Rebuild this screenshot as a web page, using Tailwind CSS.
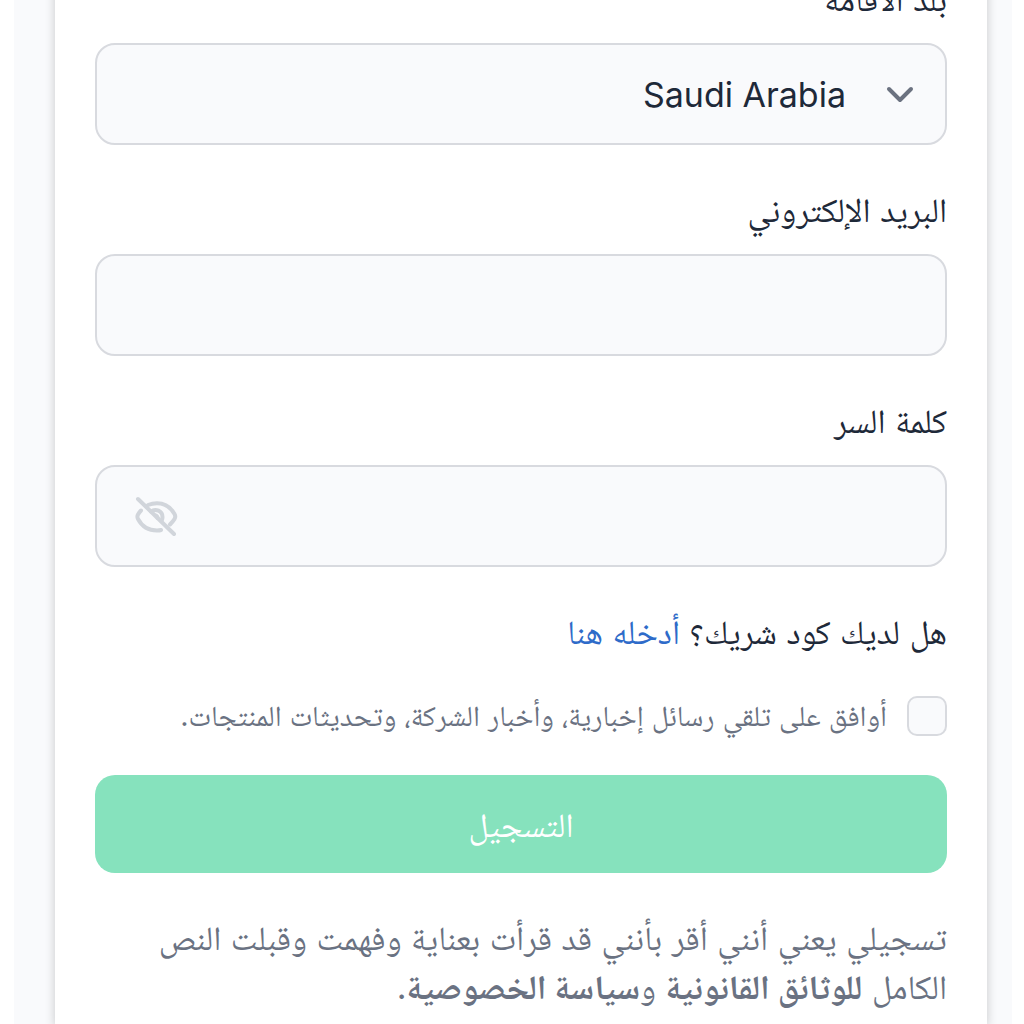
<!DOCTYPE html>
<html lang="ar" dir="rtl">
<head>
    <meta charset="UTF-8">
    <meta name="viewport" content="width=device-width, initial-scale=1.0">
    <title>التسجيل</title>
    <script src="https://cdn.jsdelivr.net/npm/@tailwindcss/browser@4"></script>
</head>
<body class="h-screen overflow-hidden bg-white pl-[14px] pr-3 font-['Inter','Noto_Naskh_Arabic','Noto_Naskh_Arabic_UI','DejaVu_Sans',sans-serif] text-gray-800">
    <main class="min-h-screen bg-[#f9fafc] pl-[41px] pr-[25px]">
        <form class="-mt-[25px] min-h-[calc(100vh+25px)] bg-white px-10 pb-4 shadow-[0_0_10px_rgba(0,0,0,0.2)]">
            <div class="mb-[41px]">
                <label for="country" class="mb-5 block h-12 text-[34px] leading-[48px]">بلد الاقامة</label>
                <div class="relative">
                    <select id="country" class="block h-[102px] w-full appearance-none rounded-[20px] border-2 border-[#d8dadf] bg-[#f9fafc] pl-10 pr-[99px] text-[34px]">
                        <option>Saudi Arabia</option>
                    </select>
                    <svg class="pointer-events-none absolute right-8 top-[41px] h-5 w-[30px]" viewBox="0 0 30 20" fill="none" stroke="#6b7280" stroke-width="4" stroke-linecap="round" stroke-linejoin="round">
                        <path d="M4 5l11 11L26 5" />
                    </svg>
                </div>
            </div>

            <div class="mb-[41px]">
                <label for="email" class="mb-5 block h-12 text-[34px] leading-[48px]">البريد الإلكتروني</label>
                <input type="email" id="email" class="block h-[102px] w-full rounded-[20px] border-2 border-[#d8dadf] bg-[#f9fafc] px-10 text-[34px]">
            </div>

            <div class="mb-[41px]">
                <label for="password" class="mb-5 block h-12 text-[34px] leading-[48px]">كلمة السر</label>
                <div class="relative">
                    <input type="password" id="password" class="block h-[102px] w-full rounded-[20px] border-2 border-[#d8dadf] bg-[#f9fafc] pl-24 pr-10 text-[34px]">
                    <button type="button" aria-label="إظهار كلمة السر" class="absolute left-9 top-[27px]">
                        <svg class="h-12 w-12" viewBox="0 0 48 48" fill="none" stroke="#d1d5db" stroke-width="4" stroke-linecap="round" stroke-linejoin="round">
                            <path d="M7 7l36 35" />
                            <path d="M17 13c3-1.200 6-1.700 9-1.700 8 0 14 4.500 17.500 10.700 1 1.700 1 3.300 0 5-1.200 2-2.500 3.500-4.500 5.500" />
                            <path d="M10 18.500c-1.500 1.500-2.300 2.700-3 4-.8 1.500-.8 3 0 4.500C11 34.500 18 38.500 26 38.500c1.300 0 2.500 0 4-.5" />
                            <path d="M20 19.500c4.500-3.500 11.500-.5 11.500 5.500 0 1.200-.2 2.200-.6 3" />
                            <path d="M25 23.500c1 .4 1.500 1.200 1.500 2.500" />
                        </svg>
                    </button>
                </div>
            </div>

            <p class="mb-[37px] h-12 text-[34px] leading-[48px]">هل لديك كود شريك؟ <a href="#" class="text-[#2e6bc9]">أدخله هنا</a></p>

            <div class="mb-[37px] flex h-[45px] items-center gap-5">
                <input type="checkbox" id="news" class="size-10 shrink-0 appearance-none rounded-[10px] border-2 border-[#d8dadf] bg-[#f9fafc]">
                <label for="news" class="whitespace-nowrap text-[29px] leading-[44px] text-gray-500">أوافق على تلقي رسائل إخبارية، وأخبار الشركة، وتحديثات المنتجات.</label>
            </div>

            <button type="submit" class="mb-10 block h-[98px] w-full rounded-[20px] bg-[#86e2bd] text-[34px] text-white">التسجيل</button>

            <p class="text-[34px] leading-[49px] text-gray-500">تسجيلي يعني أنني أقر بأنني قد قرأت بعناية وفهمت وقبلت النص الكامل <a href="#" class="font-bold">للوثائق القانونية</a> و<a href="#" class="font-bold">سياسة الخصوصية</a>.</p>
        </form>
    </main>
</body>
</html>
